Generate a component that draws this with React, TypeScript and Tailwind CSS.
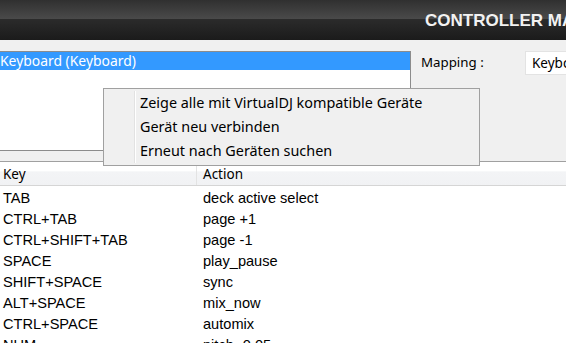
import React from "react";

const rows: [string, string][] = [
  ["TAB", "deck active select"],
  ["CTRL+TAB", "page +1"],
  ["CTRL+SHIFT+TAB", "page -1"],
  ["SPACE", "play_pause"],
  ["SHIFT+SPACE", "sync"],
  ["ALT+SPACE", "mix_now"],
  ["CTRL+SPACE", "automix"],
  ["NUM -", "pitch -0.05"],
];

const ui = { fontFamily: '"Noto Sans", "Open Sans", sans-serif' };
const arial = { fontFamily: '"Liberation Sans", Arial, sans-serif' };

export default function App() {
  return (
    <div className="relative w-[566px] h-[343px] overflow-hidden bg-white">
      {/* title bar */}
      <div className="h-[40px] flex items-center whitespace-nowrap overflow-hidden bg-[linear-gradient(to_bottom,#303030_0%,#4a4a4a_47%,#2b2b2b_48%,#1b1b1b_100%)]">
        <div
          className="pl-[425px] pt-[1px] text-[17px] font-bold text-[#f2f2f2] leading-none"
          style={arial}
        >
          CONTROLLER MAPPING
        </div>
      </div>

      {/* device panel */}
      <div className="h-[122px] bg-[#f0f0f0] border-b border-[#a0a0a0] flex items-start pt-[11px] whitespace-nowrap overflow-hidden">
        <div className="-ml-[4px] w-[415px] h-[100px] shrink-0 bg-white border border-[#8c8c8c]">
          <div
            className="h-[18px] bg-[#3399ff] text-white text-[13.9px] leading-[18px] pl-[3px]"
            style={ui}
          >
            Keyboard (Keyboard)
          </div>
        </div>
        <div
          className="ml-[10px] w-[104px] shrink-0 text-[13.3px] leading-[22px] text-black"
          style={ui}
        >
          Mapping :
        </div>
        <div
          className="h-[24px] w-[80px] shrink-0 bg-white border border-[#e3e3e3] pl-[6px] text-[13.5px] leading-[22px] text-black"
          style={ui}
        >
          Keyboard
        </div>
      </div>

      {/* table */}
      <div>
        <div
          className="h-[24px] grid grid-cols-[197px_1fr] bg-[linear-gradient(to_bottom,#ffffff_0%,#ffffff_40%,#f3f4f6_42%,#f1f2f4_100%)] border-b border-[#d5d5d5] text-[13.5px] leading-[14px] text-black"
          style={ui}
        >
          <div className="pl-[3px] pt-[5px] border-r border-[#e3e3e3]">Key</div>
          <div className="pl-[6px] pt-[5px]">Action</div>
        </div>
        <div className="pt-[2px]">
          {rows.map(([k, a]) => (
            <div
              key={k}
              className="h-[21px] grid grid-cols-[197px_1fr] text-[14.6px] leading-[21px] text-black"
              style={arial}
            >
              <div className="pl-[3px]">{k}</div>
              <div className="pl-[6px]">{a}</div>
            </div>
          ))}
        </div>
      </div>

      {/* context menu */}
      <div
        className="absolute left-[103px] top-[88px] w-[377px] h-[78px] bg-[#f0f0f0] border border-[#a0a0a0] pt-[2px]"
        style={ui}
      >
        <div className="absolute left-[30px] top-[2px] bottom-[2px] w-[2px] border-l border-[#e2e2e2] border-r border-r-white" />
        {[
          "Zeige alle mit VirtualDJ kompatible Geräte",
          "Gerät neu verbinden",
          "Erneut nach Geräten suchen",
        ].map((t) => (
          <div
            key={t}
            className="h-[24px] pl-[36px] text-[14.4px] leading-[24px] text-black whitespace-nowrap"
          >
            {t}
          </div>
        ))}
      </div>
    </div>
  );
}
